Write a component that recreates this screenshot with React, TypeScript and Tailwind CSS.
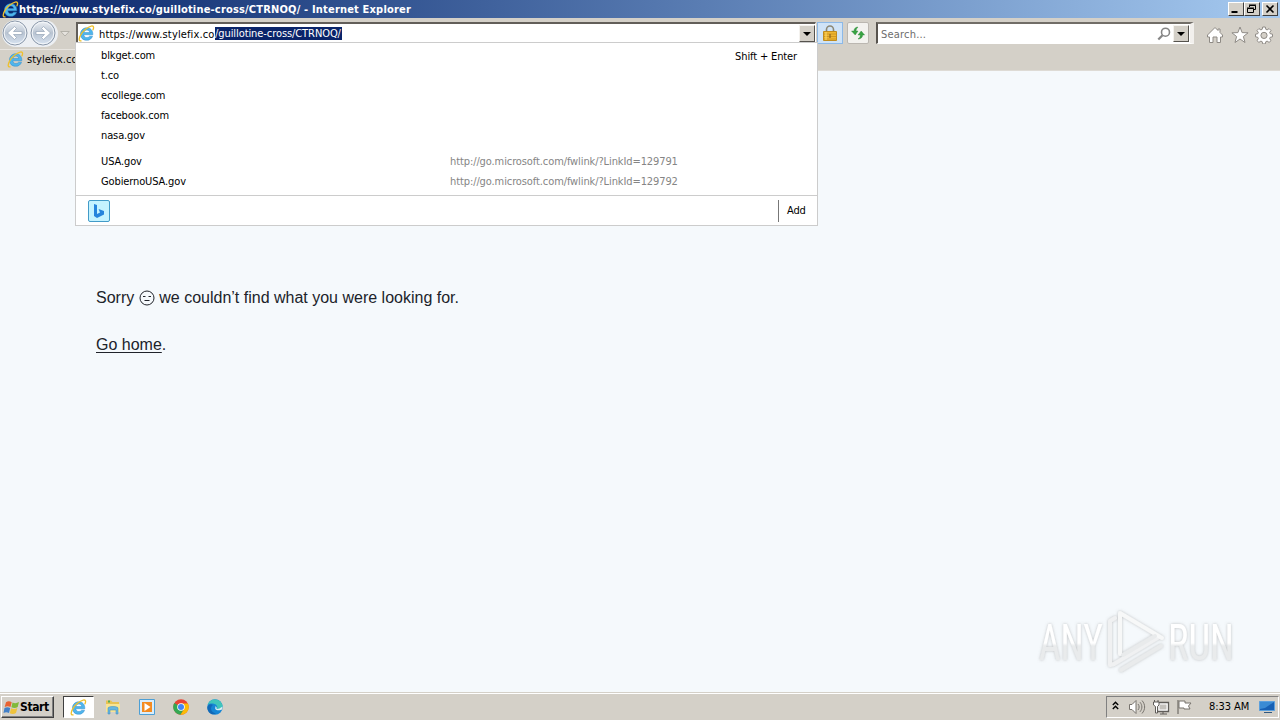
import React from "react";

function IEIcon({ className }: { className: string }) {
  return (
    <svg viewBox="0 0 18 18" className={className}>
      <path
        d="M15.7 10.3H6.2c.1 1.9 1.4 3 3.2 3 1.300 0 2.200-.5 2.800-1.500h3.200c-.9 2.800-3.200 4.400-6.200 4.400-4 0-6.600-2.700-6.600-6.500S5.300 3 9.200 3c4.200 0 6.700 2.900 6.500 7.300zM6.300 8h6.100c-.2-1.600-1.300-2.600-3-2.600S6.600 6.400 6.300 8z"
        fill="#4fb5ec"
        stroke="#2b86c9"
        strokeWidth=".5"
      />
      <path
        d="M3.200 16.800C.8 17.200.7 14.500 2.600 11 5 6.500 10.500 1.800 14 1.100c2.600-.5 3 1.400 1.900 4"
        fill="none"
        stroke="#efc02c"
        strokeWidth="1.400"
        strokeLinecap="round"
      />
    </svg>
  );
}

function NavButton({ flip = false }: { flip?: boolean }) {
  return (
    <svg viewBox="0 0 26 26" className={flip ? "h-[26px] w-[26px] -scale-x-100" : "h-[26px] w-[26px]"}>
      <defs>
        <linearGradient id="navFill" x1="0" y1="0" x2="0" y2="1">
          <stop offset="0" stopColor="#eef1f5" />
          <stop offset=".5" stopColor="#b9c4d2" />
          <stop offset="1" stopColor="#d8e4f2" />
        </linearGradient>
      </defs>
      <circle cx="13" cy="13" r="12" fill="url(#navFill)" stroke="#8d9aab" />
      <circle cx="13" cy="13" r="10.800" fill="none" stroke="#f4f7fa" />
      <path d="M5.500 13l7-6.500 2 2-3 3H20v3h-8.500l3 3-2 2z" fill="#fff" stroke="#95a5b8" strokeWidth=".7" />
    </svg>
  );
}

function DropArrow() {
  return (
    <span className="flex h-[17px] w-4 shrink-0 items-center justify-center border border-t-[#f4f2ee] border-l-[#f4f2ee] border-r-[#55524d] border-b-[#55524d] bg-[#d4d0c8]">
      <svg viewBox="0 0 8 4" className="h-1 w-2">
        <path d="M0 0h8L4 4z" fill="#000" />
      </svg>
    </span>
  );
}

function WinButton({ children }: { children: React.ReactNode }) {
  return (
    <span className="flex h-[14px] w-4 items-center justify-center border border-t-white border-l-white border-r-[#404040] border-b-[#404040] bg-[#d4d0c8]">
      <svg viewBox="0 0 12 10" className="h-[10px] w-3" fill="none" stroke="#000">
        {children}
      </svg>
    </span>
  );
}

function Suggestion({ name, url }: { name: string; url?: string }) {
  return (
    <div className="flex h-5 items-center">
      <span className="w-[350px] pl-px">{name}</span>
      {url && <span className="tracking-[-0.1px] text-[#858585]">{url}</span>}
    </div>
  );
}

function TitleBar() {
  return (
    <div className="flex h-[18px] items-center justify-between bg-gradient-to-r from-[#0a246a] to-[#a6caf0] pr-[2px] pl-[2px]">
      <div className="flex items-center">
        <IEIcon className="h-[17px] w-[17px]" />
        <span className="pt-px text-[11px] leading-[17px] font-bold tracking-[0.18px] whitespace-nowrap text-white">
          https://www.stylefix.co/guillotine-cross/CTRNOQ/ - Internet Explorer
        </span>
      </div>
      <div className="flex">
        <WinButton>
          <path d="M1.500 8h6" strokeWidth="2" />
        </WinButton>
        <WinButton>
          <path d="M3.500 3V1.500h6v4H8M3 1h7" />
          <path d="M1.500 4.500h6v4h-6zM1 4h7" />
        </WinButton>
        <span className="w-[2px]" />
        <WinButton>
          <path d="M2.500 1.500l7 7M9.500 1.500l-7 7" strokeWidth="1.600" />
        </WinButton>
      </div>
    </div>
  );
}

function ToolBar() {
  return (
    <div className="flex h-[30px] items-start bg-[#d4d0c8]">
      <div className="mt-[2px] ml-[2px] flex h-[27px] w-[56px] gap-[2px] rounded-full bg-[#eceff3]">
        <NavButton />
        <NavButton flip />
      </div>
      <svg viewBox="0 0 10 6" className="mt-[13px] ml-[2px] h-[6px] w-[10px]">
        <path d="M.8.5h8.400L5 5z" fill="#e6e3de" stroke="#aaa7a0" strokeWidth=".8" />
      </svg>
      <div className="mt-1 ml-[6px] flex h-[22px] w-[740px] items-center border-t-2 border-l-2 border-r border-b border-t-[#625e59] border-l-[#625e59] border-r-white border-b-[#d4d0c8] bg-white">
        <IEIcon className="h-[17px] w-[17px]" />
        <span className="ml-1 w-[116px] pt-[2px] text-[11px] leading-[13px] tracking-[0.14px] whitespace-nowrap">
          https://www.stylefix.co
        </span>
        <span className="h-[13px] w-[127px] bg-[#0a246a] pt-px text-[11px] leading-3 tracking-[-0.08px] whitespace-nowrap text-white">
          /guillotine-cross/CTRNOQ/
        </span>
        <span className="flex-1" />
        <DropArrow />
      </div>
      <span className="mt-1 ml-[1px] flex h-[22px] w-[26px] items-center justify-center border border-[#8cb9e8] bg-[#cfe3f7]">
        <svg viewBox="0 0 14 16" className="h-4 w-[14px]">
          <path d="M3.500 8V4.500a3.500 3.500 0 017 0V8" fill="none" stroke="#8b8775" strokeWidth="1.600" />
          <path d="M.5 6.500h13v9H.5z" fill="#eeb733" stroke="#c08c1e" />
          <path d="M1 9h12M1 11.500h12M1 14h12" stroke="#c98f1f" strokeWidth=".8" />
          <path d="M3 7v8" stroke="#ffdc6d" />
          <path d="M7 9v4" stroke="#8a6420" strokeWidth="1.200" />
        </svg>
      </span>
      <span className="mt-1 ml-1 flex h-[22px] w-[22px] items-center justify-center rounded-[2px] border border-[#bbb7b1] bg-[#f3f2ef]">
        <svg viewBox="0 0 14 14" className="h-[14px] w-[14px]" fill="#39a343" stroke="#278434" strokeWidth=".4">
          <path d="M7 1C4.500 1.200 3 2.500 3 5H.5l3.700 4L7 5H5c0-1.500.6-2.500 2-4z" />
          <path d="M7 13c2.700 0 4.600-1.500 4.600-4h2L10.200 5 7 9h2.300C9.300 11 8.500 12 7 13z" />
        </svg>
      </span>
      <div className="mt-1 ml-[7px] flex h-[22px] w-[318px] items-center border-t-2 border-l-2 border-r-4 border-b border-t-[#716d67] border-l-[#57534e] border-r-[#f2f0ed] border-b-white bg-white">
        <span className="ml-[3px] pt-[2px] text-[11px] leading-[13px] tracking-[0.2px] text-[#6d6d6d]">Search...</span>
        <span className="flex-1" />
        <svg viewBox="0 0 14 14" className="mr-[2px] h-[14px] w-[14px]" fill="none" stroke="#858585">
          <circle cx="8.500" cy="5.200" r="4" strokeWidth="1.600" />
          <path d="M5.500 8.200L1.300 12.500" strokeWidth="2.200" />
        </svg>
        <DropArrow />
        <span className="w-px" />
      </div>
      <div className="mt-2 ml-3 flex gap-[6.500px]">
        <svg viewBox="0 0 18 18" className="h-[18px] w-[18px]">
          <path d="M9 1.500L1.500 9v2h2v5.500H7V11h4v5.500h3.500V11h2V9L14 6.500V3h-2v1.500z" fill="#fff" stroke="#8e8a85" />
        </svg>
        <svg viewBox="0 0 18 18" className="h-[18px] w-[18px]">
          <path d="M9 1l2.100 5.600 6 .2-4.700 3.700L14 16.500 9 13l-5 3.500 1.600-6L.9 6.800l6-.2z" fill="#fff" stroke="#8e8a85" />
        </svg>
        <svg viewBox="0 0 18 18" className="h-[18px] w-[18px]">
          <path
            d="M7.700 1h2.600l.5 2.300 1.300.6 2-1.300L16 4.500l-1.300 2 .5 1.200 2.300.5v2.600l-2.300.5-.5 1.300 1.300 2-1.900 1.800-2-1.300-1.300.6-.5 2.200H7.700l-.5-2.200-1.300-.6-2 1.300L2 14.600l1.300-2-.5-1.300-2.300-.5V8.200l2.300-.5.5-1.200-1.300-2 1.900-1.900 2 1.300 1.300-.6z"
            fill="#fff"
            stroke="#8e8a85"
          />
          <circle cx="9" cy="9.400" r="3.100" fill="#d4d0c8" stroke="#8e8a85" />
        </svg>
      </div>
    </div>
  );
}

function SuggestionPanel() {
  return (
    <div className="absolute top-[42px] left-[75px] flex h-[184px] w-[743px] flex-col border border-[#cccccc] bg-white text-[11px] tracking-[-0.12px]">
      <div className="relative h-[152px] pt-[3px] pl-6">
        <span className="absolute top-[6px] right-[20px] leading-4 tracking-[-0.13px]">Shift + Enter</span>
        <Suggestion name="blkget.com" />
        <Suggestion name="t.co" />
        <Suggestion name="ecollege.com" />
        <Suggestion name="facebook.com" />
        <Suggestion name="nasa.gov" />
        <div className="h-[6px]" />
        <Suggestion name="USA.gov" url="http://go.microsoft.com/fwlink/?LinkId=129791" />
        <Suggestion name="GobiernoUSA.gov" url="http://go.microsoft.com/fwlink/?LinkId=129792" />
      </div>
      <div className="flex flex-1 items-center border-t border-[#cccccc] pl-3">
        <span className="flex h-[22px] w-[22px] items-center justify-center rounded-[2px] border border-[#429bc8] bg-[#c4f3ff]">
          <svg viewBox="0 0 12 16" className="h-4 w-3">
            <path d="M1 1l3 1v9l3-1.500L5.600 6 11 8v3.500L4 15l-3-2z" fill="#2584dc" />
          </svg>
        </span>
        <span className="flex-1" />
        <span className="h-[22px] w-px bg-[#777]" />
        <span className="w-[38px] pt-px pl-2">Add</span>
      </div>
    </div>
  );
}

function Watermark() {
  return (
    <svg viewBox="0 0 220 80" className="absolute right-[30px] bottom-[11px] h-20 w-[220px] overflow-visible">
      <defs>
        <linearGradient id="markFill" x1="0" y1="0" x2="0" y2="1">
          <stop offset=".5" stopColor="#ffffff" />
          <stop offset=".55" stopColor="#e9ebec" />
        </linearGradient>
        <filter id="markShadow" x="-10%" y="-20%" width="120%" height="140%">
          <feDropShadow dx="0" dy="0" stdDeviation="1.700" floodColor="#858585" floodOpacity=".5" />
        </filter>
      </defs>
      <g filter="url(#markShadow)" fill="url(#markFill)" fontFamily="Roboto, sans-serif" fontSize="49" fontWeight="400">
        <g transform="translate(9 59) scale(.68 1)">
          <text textLength="94" lengthAdjust="spacingAndGlyphs">ANY</text>
        </g>
        <g transform="translate(138 59) scale(.68 1)">
          <text textLength="97" lengthAdjust="spacingAndGlyphs">RUN</text>
        </g>
        <g fill="none" stroke="#f7f8f8" strokeWidth="4" strokeLinejoin="round" strokeLinecap="round">
          <path d="M85 17l-5 3v44l4-1 45-27" stroke="#f0f1f2" />
          <path d="M90 53V12l42 25" />
          <path d="M93 54l32-19" stroke="#e9ebec" />
          <path d="M91 69l40-24" stroke="#e9ebec" />
        </g>
      </g>
    </svg>
  );
}

function TaskBar() {
  return (
    <div className="flex h-[27px] items-center border-t border-white bg-[#d4d0c8] text-[11px]">
      <div className="ml-[1px] flex h-[22px] w-[53px] items-center border border-t-white border-l-white border-r-[#404040] border-b-[#404040] shadow-[inset_-1px_-1px_0_#808080]">
        <svg viewBox="0 0 17 17" className="ml-px h-[17px] w-[17px] shrink-0">
          <path d="M3 3.200C5 1.800 7 2.200 8.700 3.200L7.500 8C5.500 7 3.800 7 1.700 8z" fill="#e86332" />
          <path d="M9.500 3.500c2 1 4 1 6.500-.4L14.700 8c-2 1.300-4.200 1.200-6.300.3z" fill="#81b939" />
          <path d="M1.500 9c2-1.200 4-1 5.700 0L6 14c-1.800-1-3.700-1-5.500 0z" fill="#4280c8" />
          <path d="M8.100 9.300c2 1 4 1 6.300-.3L13 14c-2 1.200-4.200 1.200-6.200.2z" fill="#efc33c" />
        </svg>
        <span className="text-[12px] font-bold tracking-[-0.4px]">Start</span>
      </div>
      <div className="ml-[9px] flex h-[22px] w-[31px] items-center justify-center border border-t-[#404040] border-l-[#404040] border-r-white border-b-white bg-white">
        <IEIcon className="h-[17px] w-[17px]" />
      </div>
      <svg viewBox="0 0 16 16" className="ml-[11px] h-4 w-4">
        <path d="M1 3V1.500h5L7.500 3H14v9H1z" fill="#e8c253" />
        <path d="M1 5h14v8H1z" fill="#f8e494" />
        <path d="M3 9c0-2 10-2 10 0v6h-2v-4H5v4H3z" fill="#68b7df" stroke="#398bbd" strokeWidth=".5" />
        <path d="M3 2.500h2" stroke="#53ac57" strokeWidth="2" />
      </svg>
      <svg viewBox="0 0 16 16" className="ml-[18px] h-4 w-4">
        <path d="M.5.5h15v15H.5z" fill="#d9edfb" stroke="#4d9fd5" />
        <path d="M3 3h10v10H3z" fill="#f48b20" />
        <path d="M5.500 4l6 4-6 4z" fill="#fff" />
      </svg>
      <svg viewBox="0 0 16 16" className="ml-[18px] h-4 w-4">
        <circle cx="8" cy="8" r="7.700" fill="#e94335" />
        <path d="M8 8L1.300 4A7.700 7.700 0 007.500 15.700L11 10z" fill="#34a853" />
        <path d="M8 4.500h6.900A7.700 7.700 0 017.500 15.700L11.500 9.500z" fill="#fbbc05" />
        <circle cx="8" cy="8" r="3.800" fill="#fff" />
        <circle cx="8" cy="8" r="3" fill="#4285f4" />
      </svg>
      <svg viewBox="0 0 16 16" className="ml-[18px] h-4 w-4">
        <circle cx="8" cy="8" r="7.700" fill="#1686d5" />
        <path d="M.8 6C2-1.500 14-1.500 15.500 6.500c.5 3.500-3.500 4.500-6 3.500 1.500-1 1-4-2-5C5 4.200 2.500 4.500.8 6z" fill="#40c5bb" />
        <path d="M6 6c-4 3-1.500 8 3 8.500C4 17 .2 12.500.3 8.500 1 5.500 4 4.500 6 6z" fill="#1269b7" />
        <path d="M8.500 7c0 2-1 3 1 4 2 .8 4.500 0 5.500-.5.5-2 .5-3 .5-3l-3 2c-1.500.5-3 .5-3 0 .5-.7 0-1.500-1-2.500z" fill="#dceef3" />
      </svg>
      <span className="flex-1" />
      <div className="mr-[1px] flex h-[22px] w-[173px] items-center border border-t-[#808080] border-l-[#808080] border-r-white border-b-white">
        <svg viewBox="0 0 7 9" className="mb-[3px] ml-[5px] h-[9px] w-[7px]" fill="none" stroke="#000" strokeWidth="1.400">
          <path d="M.8 4L3.500 1.300 6.200 4M.8 8L3.500 5.300 6.200 8" />
        </svg>
        <svg viewBox="0 0 18 16" className="ml-[9px] h-4 w-[18px]" fill="#fff" stroke="#77736d">
          <path d="M1.500 5.500H4l4-4v13l-4-4H1.500z" />
          <path d="M10 5c1.500 2 1.500 4 0 6M12 3.200c2.500 3 2.500 6.600 0 9.600M14 1.500c3.500 4 3.500 9 0 13" fill="none" />
        </svg>
        <svg viewBox="0 0 18 16" className="ml-[6px] h-4 w-[18px]" fill="#fff" stroke="#605d59">
          <path d="M5.500 3.500h11v9h-11z" strokeWidth="1.300" />
          <path d="M7.500 5.500h7v5h-7z" fill="#c4c1bc" stroke="none" />
          <path d="M8 15h7M11 12.500V15M1.500 3v3l2 1.500V14h2V7.500L7 6V3H1.500zM2.500 3V1M6 3V1" />
        </svg>
        <svg viewBox="0 0 18 16" className="ml-[5px] h-4 w-[18px]">
          <path d="M3 1v14" stroke="#77736d" strokeWidth="1.300" />
          <path d="M4 2h6v2h6l-2.500 3 1.500 3H9V9H4z" fill="#fff" stroke="#77736d" />
        </svg>
        <span className="ml-4 w-[43px] pt-px text-[11px] tracking-[-0.05px] whitespace-nowrap">8:33 AM</span>
        <svg viewBox="0 0 16 14" className="ml-[7px] h-[14px] w-4 shrink-0">
          <path d="M.5 1.500h15v9H.5z" fill="#1760b4" stroke="#5ca0dd" />
          <path d="M1 2h14L6 8l-5 1z" fill="#3a8bd4" />
          <path d="M5 12.500h8" stroke="#30587f" />
        </svg>
      </div>
    </div>
  );
}

export default function App() {
  return (
    <div className="relative flex h-[720px] w-[1280px] flex-col overflow-hidden bg-[#f5f9fc] font-['DejaVu_Sans_Condensed','DejaVu_Sans',sans-serif] text-black [font-stretch:condensed]">
      <TitleBar />
      <ToolBar />
      <div className="flex h-[23px] items-center border-b border-[#dedbd5] bg-[#d4d0c8]">
        <div className="flex h-[21px] w-[220px] items-center border-t border-[#e7e4df] pl-[7px]">
          <IEIcon className="h-[17px] w-[17px]" />
          <span className="ml-[3px] pt-[2px] text-[11px] tracking-[0px]">stylefix.co</span>
        </div>
      </div>
      <main className="relative flex-1 pt-[217px] pl-24 font-['Liberation_Sans',Arial,sans-serif] text-[16px] leading-5 text-[#20232a]">
        <p className="flex items-center">
          Sorry
          <svg viewBox="0 0 16 16" className="mr-1 ml-[5px] h-4 w-4" fill="none" stroke="#20232a">
            <circle cx="8" cy="8" r="7" />
            <path d="M4 6.500h2.500M9.500 6.500H12M5.500 10.500h5" />
          </svg>
          <span>we couldn’t find what you were looking for.</span>
        </p>
        <p className="mt-[27px]">
          <span className="underline underline-offset-2">Go home</span>.
        </p>
        <Watermark />
      </main>
      <div className="h-px bg-[#d4d0c8]" />
      <TaskBar />
      <SuggestionPanel />
    </div>
  );
}
